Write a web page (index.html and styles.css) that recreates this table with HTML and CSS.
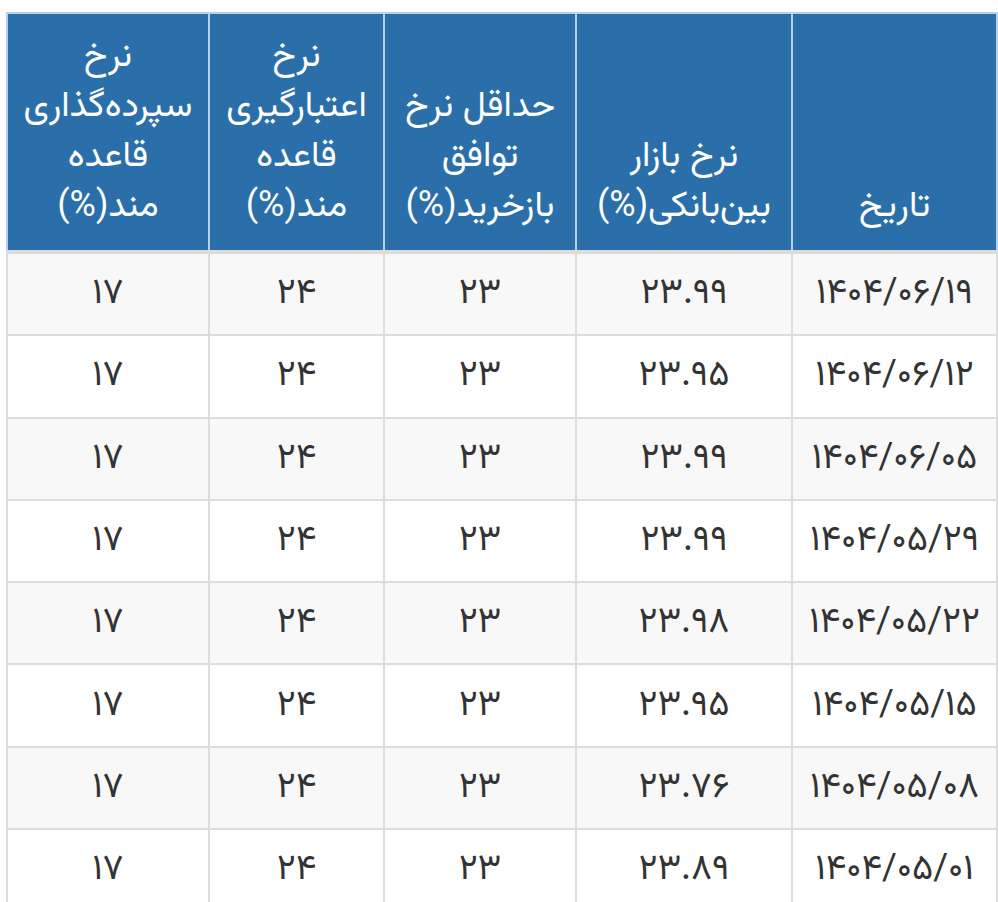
FILE: index.html
```html
<!DOCTYPE html>
<html lang="fa" dir="rtl">
<head>
<meta charset="utf-8">
<link rel="stylesheet" href="styles.css">
</head>
<body>
<table class="rates">
  <colgroup>
    <col class="c-date">
    <col class="c-inter">
    <col class="c-repo">
    <col class="c-credit">
    <col class="c-deposit">
  </colgroup>
  <thead>
    <tr>
      <th>تاریخ</th>
      <th>نرخ بازار<br>بین‌بانکی(%)</th>
      <th>حداقل نرخ<br>توافق<br>بازخرید(%)</th>
      <th>نرخ<br>اعتبارگیری<br>قاعده<br>مند(%)</th>
      <th>نرخ<br>سپرده‌گذاری<br>قاعده<br>مند(%)</th>
    </tr>
  </thead>
  <tbody>
    <tr><td>۱۴۰۴/۰۶/۱۹</td><td>۲۳.۹۹</td><td>۲۳</td><td>۲۴</td><td>۱۷</td></tr>
    <tr><td>۱۴۰۴/۰۶/۱۲</td><td>۲۳.۹۵</td><td>۲۳</td><td>۲۴</td><td>۱۷</td></tr>
    <tr><td>۱۴۰۴/۰۶/۰۵</td><td>۲۳.۹۹</td><td>۲۳</td><td>۲۴</td><td>۱۷</td></tr>
    <tr><td>۱۴۰۴/۰۵/۲۹</td><td>۲۳.۹۹</td><td>۲۳</td><td>۲۴</td><td>۱۷</td></tr>
    <tr><td>۱۴۰۴/۰۵/۲۲</td><td>۲۳.۹۸</td><td>۲۳</td><td>۲۴</td><td>۱۷</td></tr>
    <tr><td>۱۴۰۴/۰۵/۱۵</td><td>۲۳.۹۵</td><td>۲۳</td><td>۲۴</td><td>۱۷</td></tr>
    <tr><td>۱۴۰۴/۰۵/۰۸</td><td>۲۳.۷۶</td><td>۲۳</td><td>۲۴</td><td>۱۷</td></tr>
    <tr><td>۱۴۰۴/۰۵/۰۱</td><td>۲۳.۸۹</td><td>۲۳</td><td>۲۴</td><td>۱۷</td></tr>
  </tbody>
</table>
</body>
</html>
```
FILE: styles.css
```css
html, body {
  margin: 0;
  background: #ffffff;
}
body {
  padding: 12px 0 0 8px;
  font-family: "Vazirmatn", "DejaVu Sans", sans-serif;
  color: #333333;
  overflow: hidden;
}
.rates {
  direction: rtl;
  width: 990px;
  table-layout: fixed;
  border-collapse: collapse;
}
.c-date { width: 205px; }
.c-inter { width: 216px; }
.c-repo { width: 192px; }
.c-credit { width: 175px; }
.c-deposit { width: 202px; }
.rates th {
  background: #2a6fa9;
  color: #ffffff;
  font-weight: normal;
  font-size: 36px;
  line-height: 50px;
  height: 218px;
  padding: 0 4px 18px;
  vertical-align: bottom;
  text-align: center;
  border: 2px solid #b6d1ea;
  border-bottom: 4px solid #dcdcdc;
}
.rates td {
  font-size: 36px;
  line-height: 50px;
  height: 80.3px;
  padding: 0 6px;
  text-align: center;
  vertical-align: middle;
  border: 2px solid #dddddd;
}
.rates tbody tr:nth-child(odd) td {
  background: #f8f8f8;
}
.rates tbody tr:nth-child(even) td {
  background: #ffffff;
}
```
